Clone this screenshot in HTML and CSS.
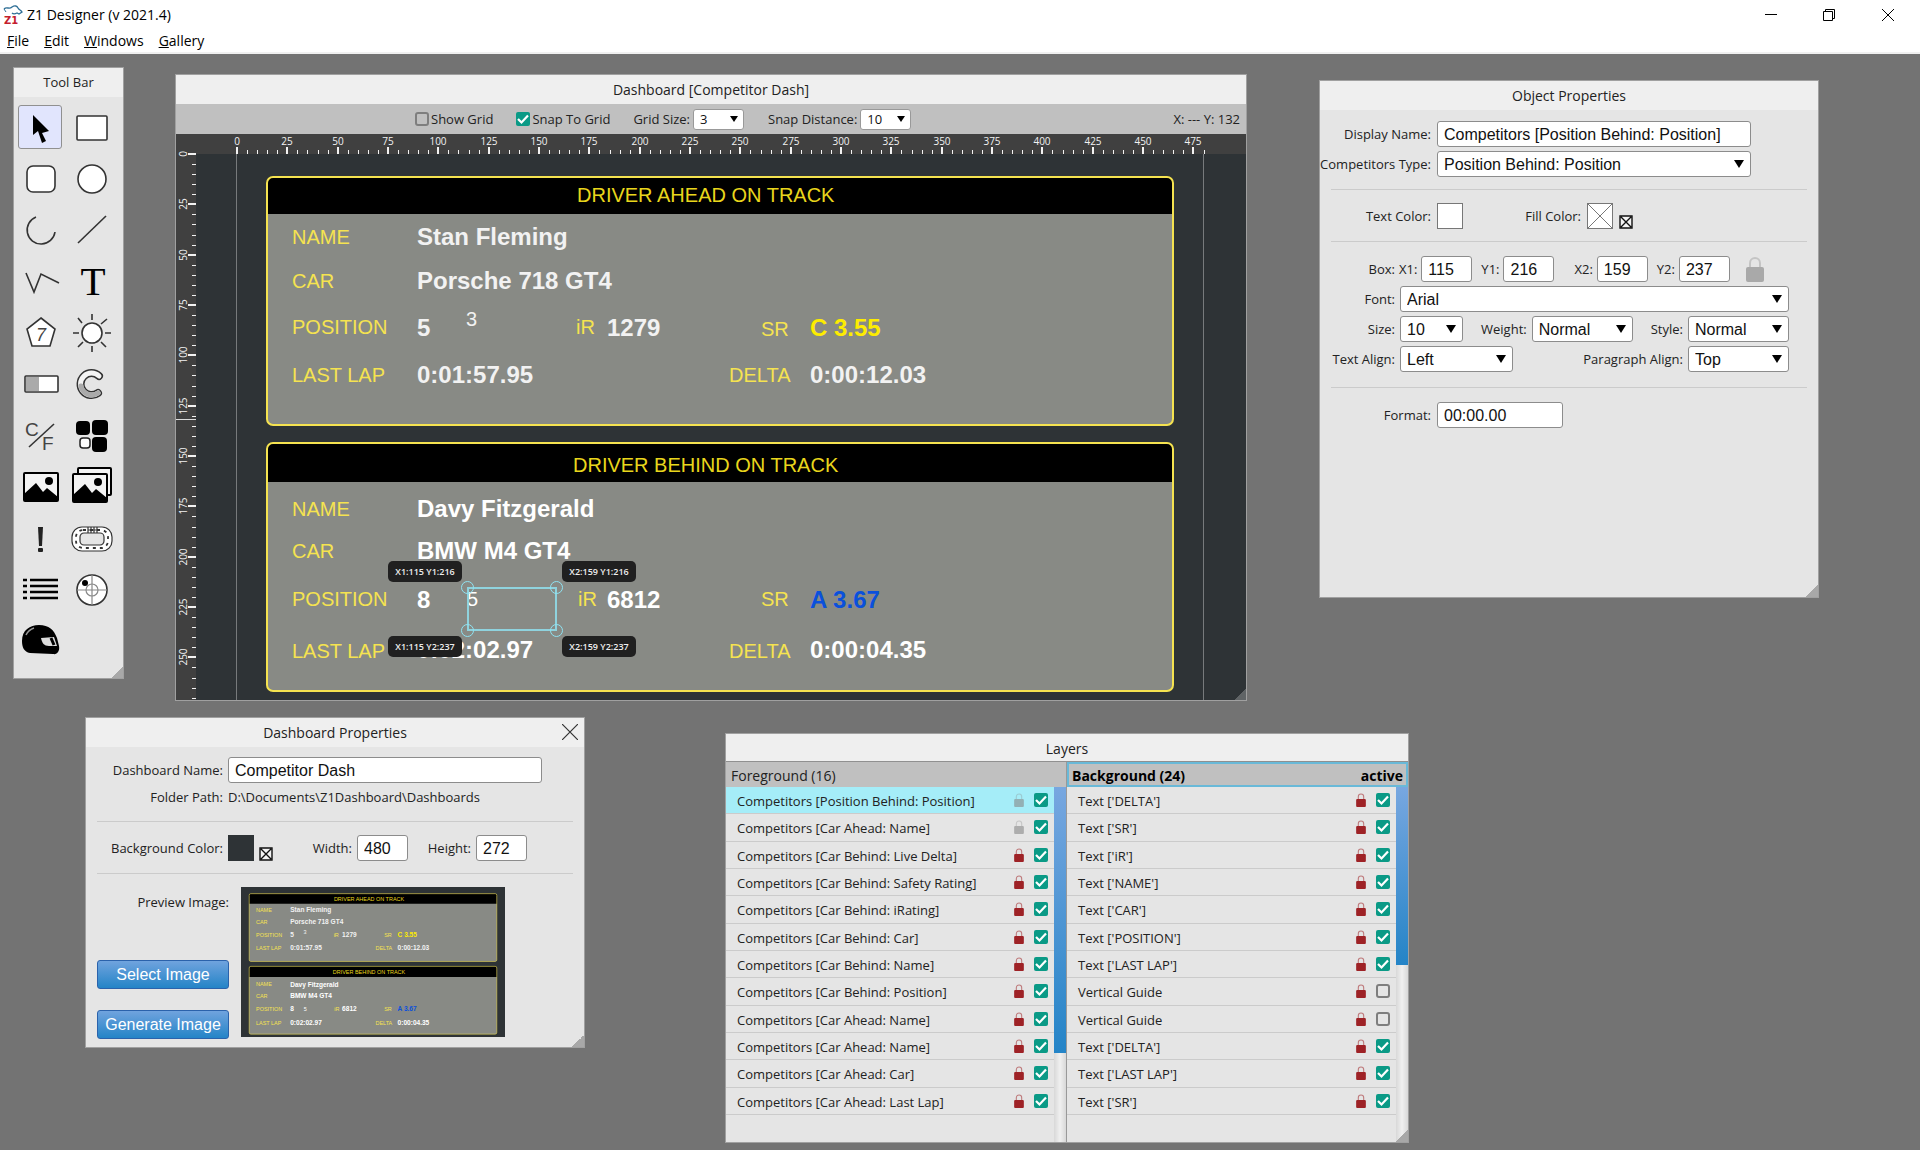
FILE: index.html
```html
<!DOCTYPE html>
<html lang="en">
<head>
<meta charset="utf-8">
<title>Z1 Designer (v 2021.4)</title>
<link rel="stylesheet" href="styles.css">
</head>
<body>
<svg class="defs" aria-hidden="true">
  <symbol id="lock" viewBox="0 0 18 26">
    <path d="M4 12V7a5 5 0 0 1 10 0v5" fill="none" stroke="currentColor" stroke-width="2" opacity=".55"/>
    <rect x="0" y="11" width="18" height="15" rx="2" fill="currentColor"/>
  </symbol>
  <symbol id="picture" viewBox="-18 -15 36 30">
    <rect x="-17" y="-14" width="34" height="28" rx="1" fill="#f4f4f4" stroke="#000" stroke-width="2"/>
    <path d="M-17 14V7L-5-4 2 5 6 1 17 10V14Z"/>
    <circle cx="8" cy="-6" r="4"/>
  </symbol>
  <symbol id="clear" viewBox="0 0 14 14">
    <path d="M1 1H13V13H1ZM2 2 12 12M12 2 2 12" fill="#f4f4f4" stroke="#111" stroke-width="1.4"/>
  </symbol>
</svg>

<header class="app-head">
  <div class="app-title">
    <svg class="logo" viewBox="0 0 20 20" aria-hidden="true">
      <path d="M1 4C4 1 6 5 9 2 12 0 14 1 15 3 16 5 18 5 19 7L16 9 14 8C12 9 10 9 9 8" fill="none" stroke="#2f6f96" stroke-width="1.3"/>
      <path d="M1 4 3 7" stroke="#2f6f96" stroke-width="1"/>
      <text x="1" y="19">Z1</text>
    </svg>
    <h1>Z1 Designer (v 2021.4)</h1>
    <div class="win-controls">
      <button aria-label="Minimize"><svg viewBox="0 0 12 12"><path d="M0 5.500H12"/></svg></button>
      <button aria-label="Restore"><svg viewBox="0 0 12 12"><path d="M.5 2.500H9.500V11.500H.5ZM2.500 2.500V.5H11.500V9.500H9.500"/></svg></button>
      <button aria-label="Close"><svg viewBox="0 0 12 12"><path d="M0 0 12 12M12 0 0 12"/></svg></button>
    </div>
  </div>
  <nav class="menu">
    <a href="#"><u>F</u>ile</a><a href="#"><u>E</u>dit</a><a href="#"><u>W</u>indows</a><a href="#"><u>G</u>allery</a>
  </nav>
</header>

<main class="desktop">
  <section class="window tools">
    <h2>Tool Bar</h2>
    <div class="tool-grid">
      <button class="on" aria-label="Select"><svg viewBox="-22 -22 44 44"><path d="M-8-13V7L-3 3 1 15 5 13 1 5 8 3Z"/></svg></button>
      <button aria-label="Rectangle"><svg class="line" viewBox="-22 -22 44 44"><rect x="-15" y="-12" width="30" height="24" rx="1"/></svg></button>
      <button aria-label="Rounded rectangle"><svg class="line" viewBox="-22 -22 44 44"><rect x="-14" y="-13" width="28" height="26" rx="6"/></svg></button>
      <button aria-label="Circle"><svg class="line" viewBox="-22 -22 44 44"><circle r="14"/></svg></button>
      <button aria-label="Arc"><svg class="line open" viewBox="-22 -22 44 44"><path d="M-5-13A14 14 0 1 0 14 2"/></svg></button>
      <button aria-label="Line"><svg class="line open" viewBox="-22 -22 44 44"><path d="M14-14-14 13"/></svg></button>
      <button aria-label="Polyline"><svg class="line open" viewBox="-22 -22 44 44"><path d="M-15-9-7 10 0-8 18 1"/></svg></button>
      <button aria-label="Text"><svg viewBox="-22 -22 44 44"><text class="serif" x="1" y="13" text-anchor="middle">T</text></svg></button>
      <button aria-label="Counter"><svg class="line" viewBox="-22 -22 44 44"><path d="M0-15 14-4 9 13H-9L-14-4Z"/><text class="seven" x="0" y="8" text-anchor="middle">7</text></svg></button>
      <button aria-label="Light"><svg class="line" viewBox="-22 -22 44 44"><circle r="10"/><path d="M13 0H19M-13 0H-19M0 13V19M0-13V-19M9 9 14 14M-9 9-14 14M9-9 15-14M-10-10-14-15"/></svg></button>
      <button aria-label="Bar gauge"><svg class="line" viewBox="-22 -22 44 44"><rect x="-16" y="-8" width="33" height="16" rx="1"/><path class="grey" d="M-15-7H-2V7H-15Z"/></svg></button>
      <button aria-label="Round gauge"><svg viewBox="-22 -22 44 44"><g fill="none" stroke-linecap="round"><path d="M7-8A11 11 0 1 0 6 9" stroke="#333" stroke-width="8"/><path d="M7-8A11 11 0 1 0 6 9" stroke="#f4f4f4" stroke-width="5"/><path d="M-11 2A11 11 0 0 0 6 9" stroke="#aaa" stroke-width="5"/></g></svg></button>
      <button aria-label="Units"><svg class="line open" viewBox="-22 -22 44 44"><path d="M13-12-12 11"/><text class="unit" x="-16" y="0">C</text><text class="unit" x="1" y="14">F</text></svg></button>
      <button aria-label="Tiles"><svg viewBox="-22 -22 44 44"><rect x="-16" y="-15" width="14" height="14" rx="4"/><rect x="0" y="-16" width="16" height="15" rx="4"/><rect x="0" y="1" width="15" height="15" rx="4"/><rect x="-12" y="2" width="10" height="10" rx="3" fill="#fff" stroke="#222" stroke-width="1.500"/></svg></button>
      <button aria-label="Image"><svg viewBox="-22 -22 44 44"><use href="#picture" x="-18" y="-15" width="36" height="30"/></svg></button>
      <button aria-label="Image list"><svg viewBox="-22 -22 44 44"><rect x="-14" y="-19" width="33" height="27" rx="1" fill="#f4f4f4" stroke="#000" stroke-width="2"/><use href="#picture" x="-20" y="-14" width="36" height="30"/></svg></button>
      <button aria-label="Alert"><svg viewBox="-22 -22 44 44"><path d="M-3-12H2L1 7H-2Z" fill="#222"/><rect x="-3" y="9" width="5" height="4" rx="1" fill="#222"/></svg></button>
      <button aria-label="Track map"><svg class="line thin" viewBox="-22 -22 44 44"><rect x="-20" y="-12" width="40" height="24" rx="10"/><rect x="-12" y="-6" width="24" height="12" rx="4" fill="#e5e5e5"/><rect x="-16" y="-9" width="32" height="18" rx="7" fill="none" stroke-width="1.800" stroke-dasharray="3 4"/><path d="M-4-12V-6M-1-12V-6M2-12V-6M5-12V-6M-4-9H5"/></svg></button>
      <button aria-label="List"><svg viewBox="-22 -22 44 44"><path d="M-18-10H-14M-11-10H17M-18-4H-14M-11-4H17M-18 2H-14M-11 2H17M-18 8H-14M-11 8H17" stroke="#000" stroke-width="2.400"/></svg></button>
      <button aria-label="Radar"><svg class="line" viewBox="-22 -22 44 44"><circle r="15"/><g class="soft"><circle r="6"/><path d="M-15 0H15M0-15V15"/></g><circle cx="-7" cy="-7" r="3" class="dot"/></svg></button>
      <button aria-label="Driver"><svg viewBox="-22 -22 44 44"><path d="M-19 0C-19-11-11-16-2-16 8-16 13-11 16-3L18 5C19 10 16 14 12 13L-11 12C-17 11-19 6-19 0Z"/><path d="M0-3 13-4 16 5H8C3 5 1 2 0-3Z" fill="#ddd"/><path d="M10-3 13 4" stroke="#000" stroke-width="3"/><path d="M-15-6C-13-10-10-12-7-13" fill="none" stroke="#999" stroke-width="1.500"/></svg></button>
    </div>
    <i class="grip"></i>
  </section>

  <section class="window dash">
    <h2>Dashboard [Competitor Dash]</h2>
    <div class="dash-bar">
      <label class="check"><input type="checkbox">Show Grid</label>
      <label class="check"><input type="checkbox" checked>Snap To Grid</label>
      <label class="pick">Grid Size:<select><option>3</option></select></label>
      <label class="pick">Snap Distance:<select><option>10</option></select></label>
      <output>X: --- Y: 132</output>
    </div>
    <div class="stage">
      <svg class="ruler top" id="ruler-x"></svg>
      <svg class="ruler side" id="ruler-y"></svg>
      <div class="canvas">
        <svg class="board" id="board" viewBox="0 0 966 546"></svg>
        <div class="selection">
          <i></i><i></i><i></i><i></i>
          <span class="tip tl">X1:115 Y1:216</span><span class="tip tr">X2:159 Y1:216</span>
          <span class="tip bl">X1:115 Y2:237</span><span class="tip br">X2:159 Y2:237</span>
        </div>
      </div>
    </div>
    <i class="grip"></i>
  </section>

  <section class="window object">
    <h2>Object Properties</h2>
    <form>
      <div class="row wide"><label for="o-name">Display Name:</label><input id="o-name" class="long" value="Competitors [Position Behind: Position]"></div>
      <div class="row wide"><label for="o-type">Competitors Type:</label><select id="o-type" class="long"><option>Position Behind: Position</option></select></div>
      <hr>
      <div class="row wide"><label for="o-text">Text Color:</label><button type="button" id="o-text" class="swatch"></button>
        <label for="o-fill" class="fill-label">Fill Color:</label><button type="button" id="o-fill" class="swatch"><svg viewBox="0 0 24 24"><path d="M0 0 24 24M24 0 0 24" stroke="#777"/></svg></button>
        <button type="button" class="clear" aria-label="No fill"><svg><use href="#clear"/></svg></button></div>
      <hr>
      <div class="row box"><span class="lead">Box:</span>
        <label for="x1">X1:</label><input id="x1" class="num" value="115">
        <label for="y1">Y1:</label><input id="y1" class="num" value="216">
        <label for="x2" class="apart">X2:</label><input id="x2" class="num" value="159">
        <label for="y2">Y2:</label><input id="y2" class="num" value="237">
        <svg class="big-lock"><use href="#lock"/></svg></div>
      <div class="row"><label for="o-font" class="lead">Font:</label><select id="o-font" class="grow"><option>Arial</option></select></div>
      <div class="row"><label for="o-size" class="lead">Size:</label><select id="o-size" class="s"><option>10</option></select>
        <label for="o-weight" class="push">Weight:</label><select id="o-weight" class="m"><option>Normal</option></select>
        <label for="o-style" class="push">Style:</label><select id="o-style" class="m"><option>Normal</option></select></div>
      <div class="row"><label for="o-align" class="lead">Text Align:</label><select id="o-align" class="l"><option>Left</option></select>
        <label for="o-para" class="push">Paragraph Align:</label><select id="o-para" class="m"><option>Top</option></select></div>
      <hr class="deep">
      <div class="row wide"><label for="o-format">Format:</label><input id="o-format" class="format" value="00:00.00"></div>
    </form>
    <i class="grip"></i>
  </section>

  <section class="window props">
    <h2>Dashboard Properties</h2>
    <button class="close" aria-label="Close"><svg viewBox="0 0 16 16"><path d="M0 0 16 16M16 0 0 16"/></svg></button>
    <form>
      <div class="row"><label for="d-name" class="lead">Dashboard Name:</label><input id="d-name" class="long" value="Competitor Dash"></div>
      <div class="row path"><span class="lead">Folder Path:</span><span>D:\Documents\Z1Dashboard\Dashboards</span></div>
      <hr>
      <div class="row"><label for="d-bg" class="lead">Background Color:</label><button type="button" id="d-bg" class="swatch dark"></button>
        <button type="button" class="clear" aria-label="No background"><svg><use href="#clear"/></svg></button>
        <label for="d-w" class="width">Width:</label><input id="d-w" class="num" value="480">
        <label for="d-h" class="height">Height:</label><input id="d-h" class="num" value="272"></div>
      <hr>
      <div class="preview">
        <div class="actions"><span>Preview Image:</span><button type="button">Select Image</button><button type="button">Generate Image</button></div>
        <svg class="thumb" id="thumb" viewBox="0 0 966 546"></svg>
      </div>
    </form>
    <i class="grip"></i>
  </section>

  <section class="window layers">
    <h2>Layers</h2>
    <div class="lists">
      <div class="list"><h3>Foreground (16)</h3><div class="scroll"><ul id="fore"></ul><div class="bar"><i class="thumb-a"></i></div></div></div>
      <div class="list"><h3 class="active"><span>Background (24)</span><span>active</span></h3><div class="scroll"><ul id="back"></ul><div class="bar"><i class="thumb-b"></i></div></div></div>
    </div>
    <i class="grip"></i>
  </section>
</main>
<script src="app.js"></script>
</body>
</html>
```
FILE: styles.css
```css
* { box-sizing: border-box; }
body { margin: 0; min-height: 100vh; display: flex; flex-direction: column; font: 13px/18px "Open Sans", sans-serif; color: #222; background: #737373; }
h1, h2, h3, ul { margin: 0; padding: 0; font-weight: 400; }
button { padding: 0; border: 0; background: none; }
svg { display: block; }
.defs { position: absolute; width: 0; height: 0; }

/* Title bar and menu */
.app-head { background: #fff; border-bottom: 2px solid #f0f0f0; color: #000; }
.app-title { display: flex; align-items: center; height: 29px; padding-left: 3px; }
.app-title h1 { font-size: 14px; line-height: 20px; flex: 1; }
.logo { width: 20px; height: 20px; margin-right: 4px; overflow: visible; }
.logo text { font: bold 10px "DejaVu Sans", sans-serif; fill: #c4202c; }
.win-controls { display: flex; padding-right: 2px; }
.win-controls button { width: 58px; height: 28px; display: grid; place-items: center; }
.win-controls button:last-child { width: 60px; }
.win-controls svg { width: 12px; height: 12px; fill: none; stroke: #000; }
.menu { display: flex; gap: 15px; height: 23px; padding: 2px 7px; font-size: 14px; line-height: 20px; }
.menu a { color: #000; text-decoration: none; }

/* Floating windows */
.desktop { position: relative; flex: 1; min-height: 1096px; overflow: hidden; }
.window { position: absolute; display: flex; flex-direction: column; background: #e5e5e5; border: 1px solid #a0a0a0; }
.window h2 { flex: none; height: 29px; line-height: 29px; font-size: 14px; text-align: center; background: #efefef; }
.grip { position: absolute; right: 0; bottom: 0; width: 12px; height: 12px; background: linear-gradient(135deg, transparent 50%, #a8a8a8 50%); }
.tools { left: 13px; top: 13px; width: 111px; height: 612px; }
.tools h2 { font-size: 13px; }
.dash { left: 175px; top: 20px; width: 1072px; height: 627px; }
.object { left: 1319px; top: 26px; width: 500px; height: 518px; }
.props { left: 85px; top: 663px; width: 500px; height: 331px; }
.layers { left: 725px; top: 679px; width: 684px; height: 410px; }

/* Tool bar */
.tool-grid { flex: 1; display: grid; grid-template-columns: repeat(2, 51px); grid-auto-rows: 1fr; place-items: center; padding: 4px 7px 12px 0; }
.tool-grid button { width: 44px; height: 44px; border: 1px solid transparent; border-radius: 3px; display: grid; place-items: center; }
.tool-grid button.on { background: #e1e5fd; border-color: #909090; }
.tool-grid svg { width: 44px; height: 44px; overflow: visible; }
.line { fill: #fff; stroke: #333; stroke-width: 1.6; }
.line.open { fill: none; }
.line.thin { stroke-width: 1.2; }
.line text { stroke: none; fill: #444; }
.line .grey { fill: #aaa; stroke: none; }
.line .soft { fill: none; stroke: #888; stroke-width: 1.2; }
.line .dot { fill: #000; stroke: none; }
.serif { font: 41px "Liberation Serif", serif; }
.seven { font: italic 18px "Liberation Sans", sans-serif; }
.unit { font: 19px "Liberation Sans", sans-serif; }

/* Form controls */
input:not([type=checkbox]), select { height: 26px; margin: 0; padding: 1px 6px 0; border: 1px solid #8c8c8c; border-radius: 3px; background: #fff; font: 16px "Liberation Sans", Arial, sans-serif; color: #111; outline: 0; }
select { appearance: none; background: #fff url("data:image/svg+xml,%3Csvg xmlns='http://www.w3.org/2000/svg' width='10' height='8'%3E%3Cpath d='M0 0H10L5 8Z'/%3E%3C/svg%3E") no-repeat right 6px center; }
input[type=checkbox] { appearance: none; flex: none; width: 14px; height: 14px; margin: 0; border: 2px solid #7e7e7e; border-radius: 3px; }
input[type=checkbox]:checked { border: 0; border-radius: 2px; background: #0a9a86 url("data:image/svg+xml,%3Csvg xmlns='http://www.w3.org/2000/svg' width='14' height='14'%3E%3Cpath d='M2 7L5.500 10.500L12 3.500' fill='none' stroke='white' stroke-width='2.200'/%3E%3C/svg%3E"); }
.row { display: flex; align-items: center; height: 26px; margin-bottom: 4px; gap: 5px; }
hr { height: 1px; margin: 12px 11px 13px; border: 0; background: #cbcbcb; }
.num { width: 51px; }
.swatch { width: 26px; height: 26px; border: 1px solid #777; background: #fff; }
.swatch svg { width: 24px; height: 24px; }
.swatch.dark { background: #2e3336; border-color: #2e3336; }
.clear { align-self: flex-end; }
.clear svg { width: 14px; height: 14px; }

/* Object properties */
.object form { padding-top: 11px; }
.object .wide { gap: 6px; }
.object .wide > label:first-child { width: 111px; text-align: right; white-space: nowrap; }
.object .row { padding-right: 29px; }
.object .long { width: 314px; }
.object .fill-label { width: 112px; text-align: right; }
.object .lead { width: 75px; text-align: right; }
.object .grow { flex: 1; }
.object .push { margin-left: auto; }
.object .s { width: 63px; }
.object .m { width: 101px; }
.object .l { width: 113px; }
.object .format { width: 126px; }
.object hr.deep { margin: 15px 11px 14px; }
.object .box { gap: 4px; margin-top: 14px; }
.box .num + label { margin-left: 5px; }
.box .num + label.apart { margin-left: 16px; }
.big-lock { width: 18px; height: 26px; margin-left: 12px; color: #a9a9a9; }

/* Dashboard properties */
.close { position: absolute; top: 6px; right: 6px; width: 16px; height: 16px; }
.close svg { width: 16px; height: 16px; stroke: #333; stroke-width: 1.2; }
.props form { padding-top: 10px; }
.props .lead { width: 137px; text-align: right; white-space: nowrap; }
.props .long { width: 314px; }
.props .path { height: 20px; }
.props hr { margin: 12px 11px 13px; }
.props .path + hr { margin-top: 14px; }
.props .width { width: 74px; text-align: right; }
.props .height { width: 58px; text-align: right; }
.preview { display: flex; gap: 12px; padding: 0 11px; }
.actions { width: 132px; height: 152px; display: flex; flex-direction: column; gap: 21px; }
.actions span { flex: 1; padding-top: 6px; text-align: right; }
.actions button { height: 29px; border: 1px solid #2b62ab; border-radius: 3px; background: linear-gradient(#70a3de, #2484c7); color: #fff; font: 16px "Liberation Sans", Arial, sans-serif; }
.thumb { width: 264px; height: 150px; background: #2e3336; }

/* Dashboard editor */
.dash-bar { flex: none; height: 30px; display: flex; align-items: center; padding: 0 6px 0 239px; background: #c0c0c0; }
.check { display: flex; align-items: center; gap: 2px; margin-right: 23px; white-space: nowrap; }
.pick { display: flex; align-items: center; gap: 3px; margin-right: 24px; white-space: nowrap; }
.pick select { width: 51px; height: 21px; padding: 0 6px; border-color: #999; font: 13px/18px "Open Sans", sans-serif; background-size: 8px 6px; background-position: right 5px top 6px; }
.dash-bar output { margin-left: auto; }
.stage { flex: 1; display: grid; grid-template-columns: 20px 1fr; grid-template-rows: 20px 1fr; background: #2e3336; overflow: hidden; }
.ruler { background: #404040; }
.ruler text { font: 10px "Open Sans", sans-serif; fill: #f2f2f2; text-anchor: middle; }
.ruler path { stroke: #f2f2f2; }
.ruler .long { stroke-width: 2; }
.ruler .cursor { stroke: #ddd; }
.ruler.top { grid-column: 1 / 3; width: 100%; height: 20px; }
.ruler.side { width: 20px; height: 100%; overflow: visible; }
.canvas { position: relative; overflow: hidden; padding-left: 40px; }
.board { width: 968px; height: 546px; border: solid #777a7c; border-width: 0 1px; }
.board text, .thumb text { font: 20px "Liberation Sans", Arial, sans-serif; fill: #f5e350; }
.board .head, .thumb .head { fill: #e9d61c; }
.board .val, .thumb .val { font-weight: 700; font-size: 24px; fill: #fff; }
.board .plain, .thumb .plain { fill: #fff; }
.board .pale, .thumb .pale { fill: #f2f2f2; }
.board .yellow, .thumb .yellow { fill: #fdec00; }
.board .blue, .thumb .blue { fill: #0a50dc; }
.selection { position: absolute; left: 271px; top: 433px; width: 90px; height: 44px; border: 2px solid #8fd3de; }
.selection i { position: absolute; width: 13px; height: 13px; border: 1px solid #8fe3f2; border-radius: 50%; }
.selection i:nth-child(-n+2) { top: -8px; }
.selection i:nth-child(n+3) { bottom: -8px; }
.selection i:nth-child(odd) { left: -8px; }
.selection i:nth-child(even) { right: -8px; }
.tip { position: absolute; width: 74px; height: 21px; border-radius: 5px; background: #202020; color: #eee; font-size: 9px; line-height: 22px; font-weight: 600; text-align: center; white-space: nowrap; }
.tl, .tr { top: -28px; }
.bl, .br { bottom: -28px; }
.tl, .bl { right: 93px; }
.tr, .br { left: 93px; }
.dash .grip { background: linear-gradient(135deg, transparent 50%, #606466 50%); }

/* Layers */
.layers h2 { height: 28px; line-height: 29px; border-bottom: 1px solid #909090; }
.lists { flex: 1; display: grid; grid-template-columns: 340px 1fr; }
.list { display: flex; flex-direction: column; }
.list + .list { border-left: 1px solid #999; }
.list h3 { height: 25px; padding: 0 5px; line-height: 28px; font-size: 14px; background: #c0c0c0; }
.list h3.active { display: flex; justify-content: space-between; padding: 0 3px; border: 2px solid #69b9d8; line-height: 24px; font-weight: 700; color: #000; }
.scroll { flex: 1; display: grid; grid-template-columns: 1fr 12px; }
.scroll ul { list-style: none; display: grid; grid-auto-rows: 1fr; padding-bottom: 27px; }
.scroll li { display: flex; align-items: center; padding: 0 6px 0 11px; border-bottom: 1px solid #cbcbcb; }
.scroll li.selected { background: #a5edf8; }
.scroll li span { flex: 1; padding-top: 2px; }
.scroll li svg { width: 10px; height: 14px; margin-right: 10px; color: #9e2226; }
.scroll li svg.off { color: #888; opacity: .6; }
.bar { background: linear-gradient(90deg, #d8d8d8, #f0f0f0 50%, #d8d8d8); }
.bar i { display: block; background: linear-gradient(#78a7e0, #2484c7); }
.thumb-a { height: 75%; }
.thumb-b { height: 50%; }
```
FILE: app.js
```js
(() => {
// Dashboard artwork, in canvas pixels: [x, baseline, text, class]
const cards = [
  { y: 23, header: 37, texts: [
    [340, 48, 'DRIVER AHEAD ON TRACK', 'head'],
    [55, 90, 'NAME', ''], [180, 91, 'Stan Fleming', 'val pale'],
    [55, 134, 'CAR', ''], [180, 135, 'Porsche 718 GT4', 'val pale'],
    [55, 180, 'POSITION', ''], [180, 182, '5', 'val pale'], [229, 172, '3', 'pale'],
    [339, 180, 'iR', ''], [370, 182, '1279', 'val pale'],
    [524, 182, 'SR', ''], [573, 182, 'C 3.55', 'val yellow'],
    [55, 228, 'LAST LAP', ''], [180, 229, '0:01:57.95', 'val pale'],
    [492, 228, 'DELTA', ''], [573, 229, '0:00:12.03', 'val pale']] },
  { y: 289, header: 39, texts: [
    [336, 318, 'DRIVER BEHIND ON TRACK', 'head'],
    [55, 362, 'NAME', ''], [180, 363, 'Davy Fitzgerald', 'val'],
    [55, 404, 'CAR', ''], [180, 405, 'BMW M4 GT4', 'val'],
    [55, 452, 'POSITION', ''], [180, 454, '8', 'val'], [230, 452, '5', 'plain'],
    [341, 452, 'iR', ''], [370, 454, '6812', 'val'],
    [524, 452, 'SR', ''], [573, 454, 'A 3.67', 'val blue'],
    [55, 504, 'LAST LAP', ''], [180, 504, '0:02:02.97', 'val'],
    [492, 504, 'DELTA', ''], [573, 504, '0:00:04.35', 'val']] }
];
const artwork = cards.map(c => `
  <rect x="30" y="${c.y}" width="906" height="248" rx="6" fill="#888a85"/>
  <path d="M30 ${c.y + c.header}V${c.y + 6}q0-6 6-6H930q6 0 6 6V${c.y + c.header}Z"/>
  <rect x="30" y="${c.y}" width="906" height="248" rx="6" fill="none" stroke="#f5e350" stroke-width="2"/>
  ${c.texts.map(([x, y, t, k]) => `<text x="${x}" y="${y}" class="${k}">${t}</text>`).join('')}`).join('');
document.getElementById('board').innerHTML = artwork;
document.getElementById('thumb').innerHTML = artwork;

// Rulers: a tick every 5 units, a label every 25
const scale = 966.5 / 480;
let across = '', down = '';
for (let u = 0; u <= 480; u += 5) {
  const x = 61 + Math.round(u * scale), big = u % 25 === 0;
  across += `<path class="${big ? 'long' : ''}" d="M${x + (big ? 0 : .5)} ${big ? 13 : 16}V20"/>`;
  if (big) across += `<text x="${x}" y="11">${u}</text>`;
}
for (let u = 0; u <= 270; u += 5) {
  const y = Math.round(u * scale), big = u % 25 === 0;
  down += `<path class="${big ? 'long' : ''}" d="M${big ? 12 : 16} ${y + (big ? 0 : .5)}H20"/>`;
  if (big) down += `<text transform="translate(11 ${y}) rotate(-90)">${u}</text>`;
}
down += '<path class="cursor" d="M0 265.500H20"/>';
document.getElementById('ruler-x').innerHTML = across;
document.getElementById('ruler-y').innerHTML = down;

// Layer lists: [name, locked, visible]
const fore = ['Position Behind: Position', 'Car Ahead: Name', 'Car Behind: Live Delta', 'Car Behind: Safety Rating',
  'Car Behind: iRating', 'Car Behind: Car', 'Car Behind: Name', 'Car Behind: Position', 'Car Ahead: Name',
  'Car Ahead: Name', 'Car Ahead: Car', 'Car Ahead: Last Lap'].map((n, i) => [`Competitors [${n}]`, i > 1, true]);
const back = ['DELTA', 'SR', 'iR', 'NAME', 'CAR', 'POSITION', 'LAST LAP', '', '', 'DELTA', 'LAST LAP', 'SR']
  .map(n => [n ? `Text ['${n}']` : 'Vertical Guide', true, !!n]);
const rows = (list, selected) => list.map(([name, locked, shown], i) => `
  <li class="${i === selected ? 'selected' : ''}"><span>${name}</span><svg class="${locked ? '' : 'off'}"><use href="#lock"/></svg>
  <input type="checkbox" aria-label="${name}" ${shown ? 'checked' : ''}></li>`).join('');
document.getElementById('fore').innerHTML = rows(fore, 0);
document.getElementById('back').innerHTML = rows(back, -1);
})();
```
